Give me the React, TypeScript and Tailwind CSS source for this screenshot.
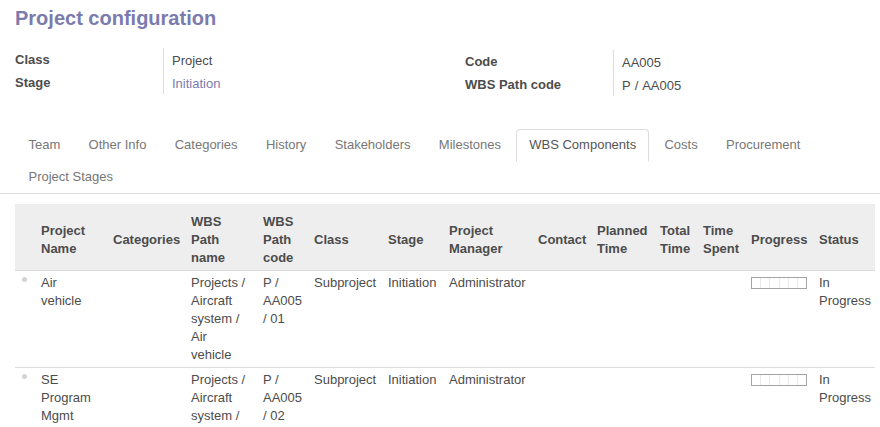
import React from "react";

type Col = { w: string; pad: string; label: string };

const cols: Col[] = [
  { w: "w-[26px]", pad: "pl-[7px] pr-0", label: "" },
  { w: "w-[72px]", pad: "pl-0 pr-[16px]", label: "Project Name" },
  { w: "w-[78px]", pad: "pl-0 pr-[8px]", label: "Categories" },
  { w: "w-[72px]", pad: "pl-0 pr-[16px]", label: "WBS Path name" },
  { w: "w-[51px]", pad: "pl-0 pr-[8px]", label: "WBS Path code" },
  { w: "w-[74px]", pad: "pl-0 pr-[6px]", label: "Class" },
  { w: "w-[61px]", pad: "pl-0 pr-[6px]", label: "Stage" },
  { w: "w-[89px]", pad: "pl-0 pr-[6px]", label: "Project Manager" },
  { w: "w-[59px]", pad: "pl-0 pr-[6px]", label: "Contact" },
  { w: "w-[63px]", pad: "pl-0 pr-[6px]", label: "Planned Time" },
  { w: "w-[43px]", pad: "pl-0 pr-[6px]", label: "Total Time" },
  { w: "w-[48px]", pad: "pl-0 pr-[6px]", label: "Time Spent" },
  { w: "w-[68px]", pad: "pl-0 pr-[6px]", label: "Progress" },
  { w: "w-[56px]", pad: "pl-0 pr-[2px]", label: "Status" },
];

const rows = [
  {
    name: "Air vehicle",
    path: "Projects / Aircraft system / Air vehicle",
    code: "P / AA005 / 01",
  },
  {
    name: "SE Program Mgmt",
    path: "Projects / Aircraft system / SE Program Mgmt",
    code: "P / AA005 / 02",
  },
];

const tabs = [
  "Team",
  "Other Info",
  "Categories",
  "History",
  "Stakeholders",
  "Milestones",
  "WBS Components",
  "Costs",
  "Procurement",
  "Project Stages",
];

function FormRow({
  label,
  value,
  link,
  wide,
}: {
  label: string;
  value: string;
  link?: boolean;
  wide?: boolean;
}) {
  return (
    <div className="flex h-[23px]">
      <div className="w-[148px] font-bold leading-[23px]">{label}</div>
      <div
        className={
          "border-l border-[#dddddd] pl-[8px] leading-[25px] " +
          (link ? "text-[#7c7bad] " : "") +
          (wide ? "[word-spacing:0.8px]" : "")
        }
      >
        {value}
      </div>
    </div>
  );
}

function Progress() {
  return (
    <div className="mt-[3px] flex h-[12px] w-[56px] border border-[#a3a3a3] bg-white">
      {[0, 1, 2, 3, 4, 5].map((i) => (
        <div key={i} className="flex-1 border-r border-[#ebebeb] last:border-r-0" />
      ))}
    </div>
  );
}

export default function App() {
  return (
    <div className="h-[427px] w-[880px] overflow-hidden bg-white font-['Liberation_Sans',Arial,sans-serif] text-[13px] leading-[18px] text-[#4c4c4c]">
      <h1 className="px-[15px] pt-[6px] text-[20px] font-bold leading-[24px] text-[#7c7bad]">
        Project configuration
      </h1>

      <div className="mt-[18px] flex px-[15px]">
        <div className="w-[450px]">
          <FormRow label="Class" value="Project" />
          <FormRow label="Stage" value="Initiation" link />
        </div>
        <div className="mt-[2px] flex-1">
          <FormRow label="Code" value="AA005" />
          <FormRow label="WBS Path code" value="P / AA005" wide />
        </div>
      </div>

      <ul className="mt-[33px] flex flex-wrap border-b border-[#dddddd] pl-[15.5px] pr-[15px]">
        {tabs.map((t) => {
          const active = t === "WBS Components";
          return (
            <li key={t} className="mb-[-1px] mr-[2.3px]">
              <a
                className={
                  "block rounded-t-[4px] border px-[12px] pb-[7px] pt-[6px] leading-[18px] " +
                  (active
                    ? "border-[#dddddd] border-b-transparent bg-white text-[#555555]"
                    : "border-transparent text-[#777777]")
                }
              >
                {t}
              </a>
            </li>
          );
        })}
      </ul>

      <table className="ml-[15px] mt-[10px] w-[860px] table-fixed border-collapse">
        <colgroup>
          {cols.map((c, i) => (
            <col key={i} className={c.w} />
          ))}
        </colgroup>
        <thead>
          <tr>
            {cols.map((c, i) => (
              <th
                key={i}
                className={
                  "border-b border-[#dddddd] bg-[#eeeeee] pb-[3px] pt-[9px] text-left align-middle font-bold leading-[18px] " +
                  c.pad
                }
              >
                {c.label}
              </th>
            ))}
          </tr>
        </thead>
        <tbody>
          {rows.map((r, ri) => {
            const cells: React.ReactNode[] = [
              <div className="mt-[3px] h-[5px] w-[5px] rounded-full bg-[#d4d4d4]" />,
              r.name,
              "",
              r.path,
              r.code,
              "Subproject",
              "Initiation",
              "Administrator",
              "",
              "",
              "",
              "",
              <Progress />,
              "In Progress",
            ];
            return (
              <tr key={ri}>
                {cells.map((cell, ci) => (
                  <td
                    key={ci}
                    className={
                      "border-b border-[#dddddd] pb-[3px] pt-[3px] align-top leading-[18px] " +
                      cols[ci].pad
                    }
                  >
                    {cell}
                  </td>
                ))}
              </tr>
            );
          })}
        </tbody>
      </table>
    </div>
  );
}
